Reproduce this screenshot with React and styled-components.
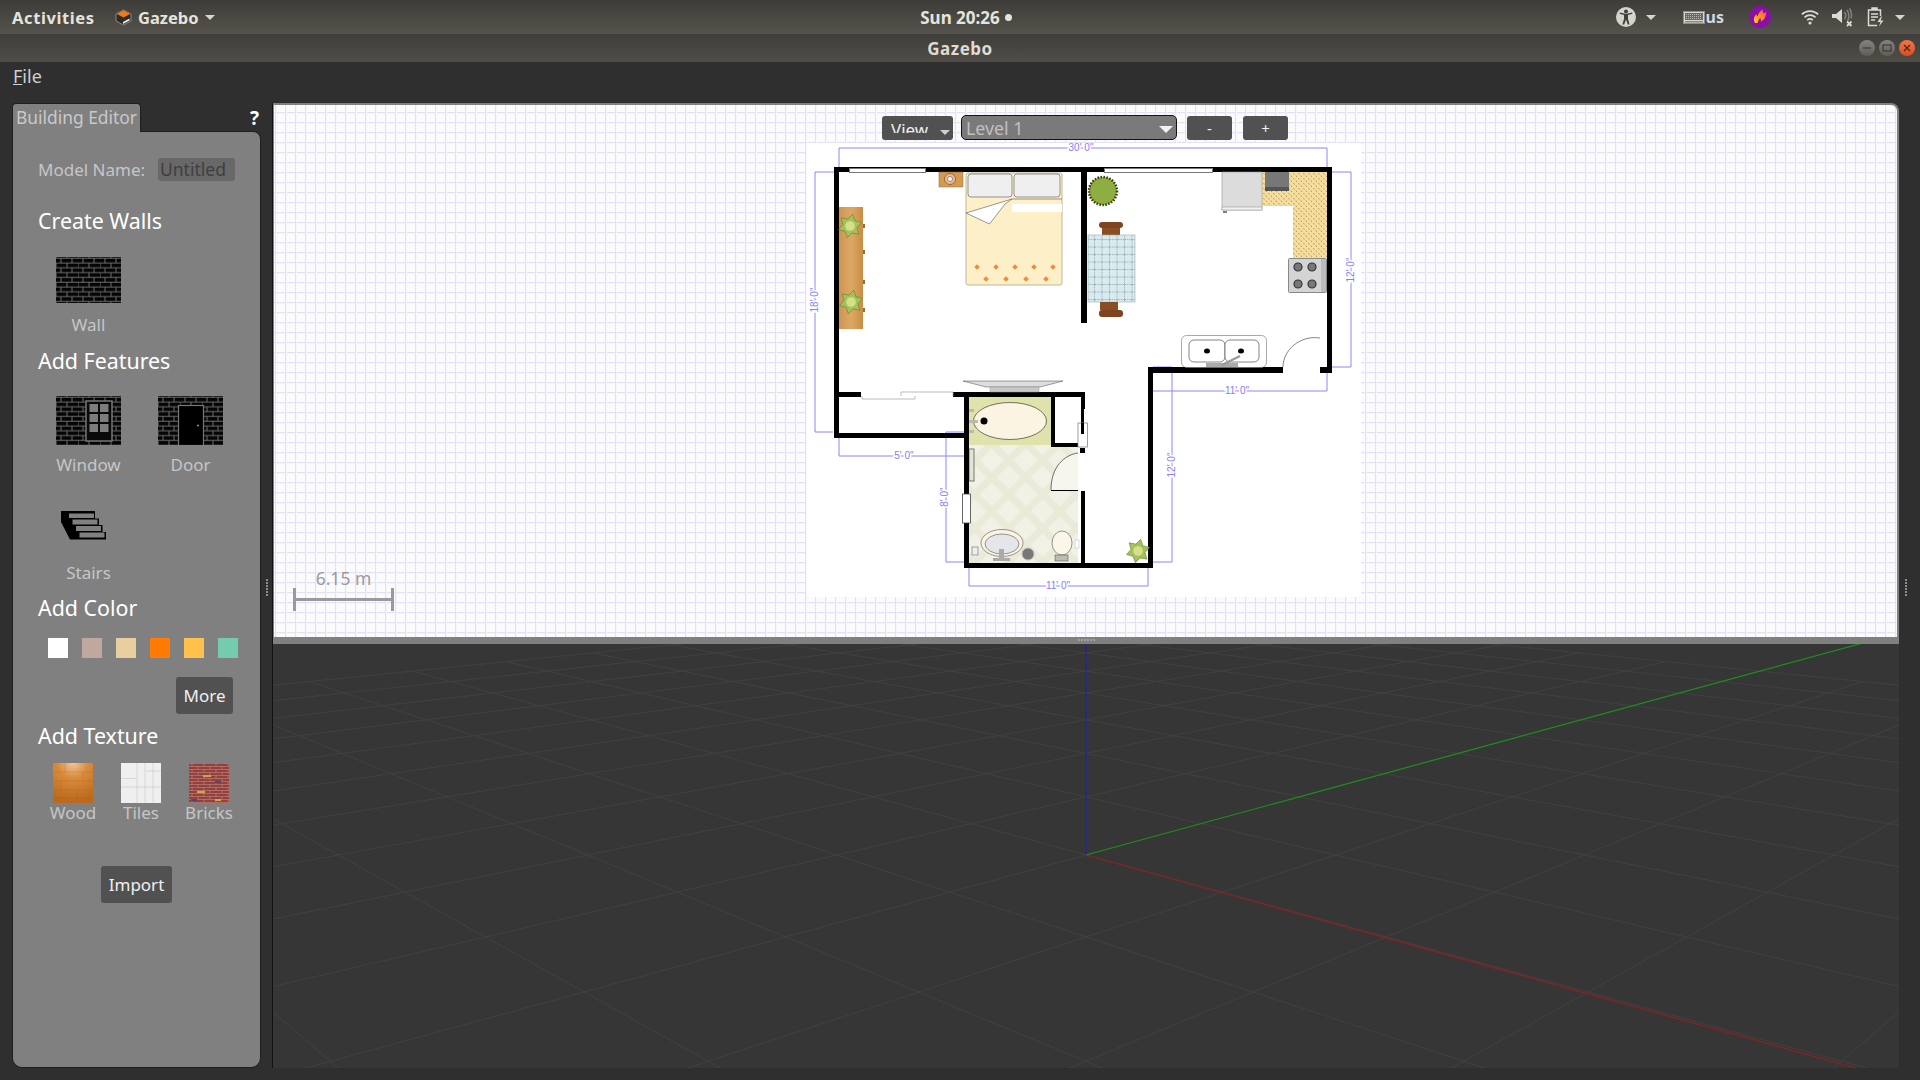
import React from 'react';
import styled, { createGlobalStyle } from 'styled-components';

const GlobalStyle = createGlobalStyle`
  html, body {
    margin: 0;
    padding: 0;
    background: #2f2f2f;
  }
  * {
    box-sizing: border-box;
  }
  body {
    font-family: "Noto Sans", "Open Sans", sans-serif;
  }
`;

const Page = styled.div`
  width: 1920px;
  height: 1080px;
  display: flex;
  flex-direction: column;
  overflow: hidden;
  background: #2f2f2f;
`;

/* ---- ubuntu shell ---- */

const TopBar = styled.div`
  height: 34px;
  display: grid;
  grid-template-columns: 1fr auto 1fr;
  align-items: center;
  background: linear-gradient(#3d3c38, #55534c);
  color: #e6e3dc;
  font-size: 16.5px;
  font-weight: 700;
`;

const TopLeft = styled.div`
  display: flex;
  align-items: center;
  padding-left: 12px;
`;

const Activities = styled.span`
  width: 82px;
  letter-spacing: 0.6px;
  white-space: nowrap;
`;

const AppMenu = styled.div`
  display: flex;
  align-items: center;
  gap: 6px;
  margin-left: 21px;
`;

const Caret = styled.span`
  width: 0;
  height: 0;
  margin-left: ${(p) => p.$left || 0}px;
  border-left: 5px solid transparent;
  border-right: 5px solid transparent;
  border-top: 5px solid #d8d5ce;
`;

const Clock = styled.div`
  display: flex;
  align-items: center;
  gap: 5px;
  padding-left: 12px;
  font-size: 17px;
`;

const ClockDot = styled.span`
  width: 7px;
  height: 7px;
  border-radius: 50%;
  background: #e6e3dc;
`;

const TopRight = styled.div`
  display: flex;
  align-items: center;
  justify-content: flex-end;
  padding-right: 15px;
`;

const TrayIcon = styled.svg`
  display: block;
  flex: none;
  margin-left: ${(p) => p.$left || 0}px;
`;

const LayoutText = styled.span`
  font-size: 16px;
  color: #cfd8e0;
  margin-left: 1px;
`;

const TitleBar = styled.div`
  height: 28px;
  position: relative;
  display: flex;
  align-items: center;
  justify-content: center;
  background: linear-gradient(#3f3e3a, #4f4d46);
  color: #dfdbd2;
  font-size: 17px;
  font-weight: 700;
  letter-spacing: 0.5px;
`;

const WindowButtons = styled.div`
  position: absolute;
  right: 5px;
  top: 6px;
  display: flex;
  gap: 4px;
`;

const WindowButton = styled.div`
  width: 16px;
  height: 16px;
  border-radius: 50%;
  display: flex;
  align-items: center;
  justify-content: center;
  background: ${(p) => (p.$close ? 'linear-gradient(#f0764a, #d94f1f)' : 'linear-gradient(#85837c, #5f5d57)')};
`;

const MenuBar = styled.div`
  height: 41px;
  padding: 3px 0 0 13px;
  color: #cfcfcf;
  font-size: 18px;
  line-height: 22px;
`;

const Accel = styled.span`
  text-decoration: underline;
`;

/* ---- main area ---- */

const Main = styled.div`
  flex: 1;
  display: flex;
  padding: 0 0 12px 12px;
`;

const Panel = styled.div`
  width: 249px;
  display: flex;
  flex-direction: column;
`;

const TabRow = styled.div`
  height: 29px;
  display: flex;
  justify-content: space-between;
  margin-bottom: -1px;
  z-index: 1;
`;

const Tab = styled.div`
  width: 129px;
  height: 29px;
  background: #808080;
  border: 1px solid #1f1f1f;
  border-bottom: none;
  border-radius: 4px 4px 0 0;
  color: #c9c9c9;
  font-size: 17.4px;
  line-height: 27px;
  padding-left: 3px;
  white-space: nowrap;
`;

const Help = styled.div`
  width: 11px;
  color: #fff;
  font-size: 19px;
  font-weight: 700;
  line-height: 30px;
`;

const PanelBody = styled.div`
  flex: 1;
  background: #808080;
  border: 1px solid #1f1f1f;
  border-radius: 0 8px 10px 10px;
`;

const ModelRow = styled.div`
  display: flex;
  align-items: center;
  justify-content: space-between;
  width: 197px;
  height: 23px;
  margin: 26px 0 0 25px;
  color: #c6c6c6;
  font-size: 17px;
  white-space: nowrap;
`;

const ModelInput = styled.div`
  width: 77px;
  height: 23px;
  padding-left: 2px;
  background: #686868;
  border-radius: 3px;
  color: #3f3f3f;
  font-size: 17.500px;
  line-height: 22px;
`;

const SectionTitle = styled.div`
  height: 28px;
  margin: ${(p) => p.$top}px 0 0 25px;
  color: #fff;
  font-size: 21.400px;
  line-height: 28px;
`;

const ToolRow = styled.div`
  display: flex;
  gap: 37px;
  margin: ${(p) => p.$top}px 0 0 43px;
`;

const ToolItem = styled.div`
  width: 65px;
  display: flex;
  flex-direction: column;
  align-items: center;
`;

const ToolLabel = styled.div`
  height: 20px;
  margin-top: ${(p) => p.$top}px;
  color: #c6c6c6;
  font-size: 17px;
  line-height: 20px;
`;

const Swatches = styled.div`
  display: flex;
  gap: 14px;
  margin: 16px 0 0 35px;
`;

const Swatch = styled.div`
  width: 20px;
  height: 20px;
  background: ${(p) => p.$color};
`;

const DarkButton = styled.div`
  width: ${(p) => p.$width}px;
  height: 37px;
  margin: ${(p) => p.$top}px 0 0 ${(p) => p.$left}px;
  display: flex;
  align-items: center;
  justify-content: center;
  background: #515151;
  border-radius: 3px;
  color: #efefef;
  font-size: 17px;
`;

const TextureRow = styled.div`
  display: flex;
  margin: 13px 0 0 26px;
`;

const TextureItem = styled.div`
  width: 68px;
  display: flex;
  flex-direction: column;
  align-items: center;
`;

const Gutter = styled.div`
  width: ${(p) => p.$width}px;
  padding: 476px 0 0 ${(p) => p.$left}px;
`;

const Dots = styled.div`
  width: 2px;
  height: 17px;
  background: repeating-linear-gradient(#8c8c8c 0 2px, transparent 2px 3px);
`;

const Editor = styled.div`
  width: 1627px;
  display: flex;
  flex-direction: column;
  border-left: 1px solid #111;
  background: #808080;
  border-radius: 0 8px 0 0;
  overflow: hidden;
`;

const CanvasFrame = styled.div`
  padding: 2px 2px 0 1px;
`;

const Canvas = styled.div`
  position: relative;
  height: 532px;
  background-color: #fbfbfc;
  background-image:
    linear-gradient(90deg, #e4e1f7 1px, #f6f5fb 1px, #f6f5fb 2px, transparent 2px),
    linear-gradient(#e4e1f7 1px, #f6f5fb 1px, #f6f5fb 2px, transparent 2px);
  background-size: 10px 10px;
  background-position: 1px 7px;
  border-radius: 0 6px 0 0;
`;

const PlanWrap = styled.div`
  position: absolute;
  left: 533px;
  top: 38px;
  width: 554px;
  height: 454px;
`;

const CanvasBar = styled.div`
  position: absolute;
  left: 608px;
  top: 10px;
  display: flex;
  align-items: center;
`;

const ViewButton = styled.div`
  position: relative;
  width: 71px;
  height: 24px;
  background: #515151;
  border-radius: 3px;
  color: #efefef;
  font-size: 17px;
  padding-left: 9px;
`;

const ViewText = styled.div`
  height: 17px;
  overflow: hidden;
  line-height: 27px;
`;

const ViewCaret = styled.span`
  position: absolute;
  right: 3px;
  bottom: 5px;
  width: 0;
  height: 0;
  border-left: 5px solid transparent;
  border-right: 5px solid transparent;
  border-top: 5px solid #d0d0d0;
`;

const LevelSelect = styled.div`
  width: 216px;
  height: 25px;
  margin-left: 8px;
  display: flex;
  align-items: center;
  justify-content: space-between;
  padding: 0 3px 0 4px;
  background: #7a7a7a;
  border: 1px solid #141414;
  border-radius: 5px;
  color: #c0c0c0;
  font-size: 17.800px;
`;

const LevelCaret = styled.span`
  width: 0;
  height: 0;
  margin-top: 3px;
  border-left: 7px solid transparent;
  border-right: 7px solid transparent;
  border-top: 7px solid #f2f2f2;
`;

const LevelButton = styled.div`
  width: 45px;
  height: 24px;
  margin-left: ${(p) => p.$left}px;
  display: flex;
  align-items: center;
  justify-content: center;
  background: #515151;
  border-radius: 3px;
  color: #efefef;
  font-size: 15px;
`;

const ScaleBar = styled.div`
  position: absolute;
  left: 19px;
  top: 464px;
  width: 101px;
  display: flex;
  flex-direction: column;
  align-items: center;
  color: #9a9a9e;
  font-size: 17.500px;
  line-height: 19px;
`;

const ScaleLine = styled.div`
  position: relative;
  width: 101px;
  height: 23px;
  border-left: 3px solid #9a9a9e;
  border-right: 3px solid #9a9a9e;

  &::before {
    content: '';
    position: absolute;
    left: 0;
    right: 0;
    top: 10px;
    height: 3px;
    background: #9a9a9e;
  }
`;

const Splitter = styled.div`
  height: 7px;
  display: flex;
  justify-content: center;
  padding: 2px 0 0 0;
`;

const SplitDots = styled.div`
  width: 17px;
  height: 2px;
  background: repeating-linear-gradient(90deg, #a0a0a0 0 2px, transparent 2px 3px);
`;

const Scene = styled.div`
  flex: 1;
  background: #363636;
`;

const SceneSvg = styled.svg`
  display: block;
  width: 1627px;
  height: 424px;
`;

const StairsSvg = styled.svg`
  display: block;
  margin-right: 9px;
`;

/* ---- drawings ---- */

const GazeboLogo = () => (
  <TrayIcon width="17" height="17" viewBox="0 0 17 17">
    <path d="M1 5 8.5 1 16 5v7l-7.5 4L1 12z" fill="#2e2d2a" stroke="#8a8880" strokeWidth="1" />
    <path d="M2 5 8.5 1.5 15 5 8.5 8.5z" fill="#f47b14" />
    <path d="M8 13 14.5 9.5v2L8 15z" fill="#eee" />
  </TrayIcon>
);

const Accessibility = () => (
  <TrayIcon width="20" height="20" viewBox="0 0 20 20">
    <circle cx="10" cy="10" r="10" fill="#d6d4cd" />
    <circle cx="10" cy="4.6" r="2" fill="#3f3e3a" />
    <path d="M3.5 6.8 8 8v4l-1.6 5.6h1.8L10 12.4l1.8 5.2h1.8L12 12V8l4.5-1.2-.4-1.3L10 7 3.9 5.5z" fill="#3f3e3a" />
  </TrayIcon>
);

const Keyboard = () => (
  <TrayIcon $left={27} width="22" height="13" viewBox="0 0 22 13">
    <rect x="0.5" y="0.5" width="21" height="12" fill="#d8d6cf" stroke="#8f8d86" />
    <rect x="2" y="2" width="18" height="7" fill="#6a6964" />
    <path d="M3 3.5h16M3 5.5h16M3 7.5h16" stroke="#b9b7b0" strokeDasharray="1 1" />
    <rect x="2" y="10" width="18" height="1.5" fill="#8a8880" />
  </TrayIcon>
);

const Flame = () => (
  <TrayIcon $left={25} width="22" height="22" viewBox="0 0 22 22">
    <defs>
      <linearGradient id="flameFill" x1="0" y1="1" x2="1" y2="0">
        <stop offset="0" stopColor="#ffd21f" />
        <stop offset="0.55" stopColor="#ff8a1c" />
        <stop offset="1" stopColor="#f0359a" />
      </linearGradient>
    </defs>
    <circle cx="11" cy="11" r="11" fill="#8b0fa6" />
    <path d="M6 17C3.5 13 6 9.5 7.5 8c0 1.6.6 2.2 1.2 2.6C9 8 11 5 14 3.6c-.8 2 0 3.4 1 3.6.8-.2 1.6-.9 2.2-2C17.500 9 16 14 11.500 15.500c1-1.600.5-3-.6-3.800C10.500 13.500 8.500 15 8.700 17z" fill="url(#flameFill)" />
  </TrayIcon>
);

const Wifi = () => (
  <TrayIcon $left={30} width="18" height="16" viewBox="0 0 18 16" fill="none" stroke="#dcdad3" strokeWidth="1.7">
    <path d="M.8 5.400C5.300 1 12.700 1 17.200 5.400" />
    <path d="M3.500 8.300C6.700 5.300 11.300 5.300 14.500 8.300" />
    <path d="M6.200 11.100C7.800 9.700 10.200 9.700 11.800 11.100" />
    <circle cx="9" cy="14" r="1.600" fill="#dcdad3" stroke="none" />
  </TrayIcon>
);

const Volume = () => (
  <TrayIcon $left={13} width="21" height="20" viewBox="0 0 21 20" fill="none">
    <path d="M0 7h4l6-5v14l-6-5H0z" fill="#dcdad3" />
    <path d="M12.500 5c1.500 2 1.500 5 0 7M15 3c2.300 3 2.300 8 .6 11M17.500 1.500c2 3 2.300 7 1.500 10" stroke="#85837c" strokeWidth="1.500" />
    <path d="M15 14.500l4.500 4.500M19.500 14.500 15 19" stroke="#dcdad3" strokeWidth="1.800" />
  </TrayIcon>
);

const Battery = () => (
  <TrayIcon $left={14} width="18" height="20" viewBox="0 0 18 20" fill="none" stroke="#dcdad3" strokeWidth="1.500">
    <path d="M10 18.500H1.500V3h12v6" />
    <path d="M5 3V1h5v2" fill="#dcdad3" />
    <path d="M4 7h7M4 10h7M4 13h4" />
    <path d="M14 9.500 10.500 15h3l-1.500 4.500 4.500-6h-3l1.500-4z" fill="#dcdad3" stroke="none" />
  </TrayIcon>
);

const BrickIcon = ({ id, height, children }) => (
  <svg width="65" height={height} viewBox={`0 0 65 ${height}`} style={{ display: 'block' }}>
    <defs>
      <pattern id={id} width="22" height="9.600" patternUnits="userSpaceOnUse">
        <rect width="22" height="9.600" fill="#050505" />
        <path d="M0 1.200H22M0 6H22" stroke="#6f6f6f" strokeWidth="1" />
        <path d="M5 1.200V6M16 1.200V6M0 6V9.600M11 6V9.600M0 0V1.200M11 0V1.200" stroke="#6f6f6f" strokeWidth="1" />
      </pattern>
    </defs>
    <rect width="65" height={height} fill={`url(#${id})`} />
    {children}
  </svg>
);

const WindowIcon = () => (
  <BrickIcon id="brickWindow" height={49}>
    <rect x="30" y="5" width="26" height="40" fill="#0a0a0a" stroke="#777" strokeWidth="1.500" />
    {[8, 18, 28].map((y) => (
      <React.Fragment key={y}>
        <rect x="33.500" y={y} width="8.500" height="8" fill="#7d7d7d" />
        <rect x="44" y={y} width="8.500" height="8" fill="#7d7d7d" />
      </React.Fragment>
    ))}
  </BrickIcon>
);

const DoorIcon = () => (
  <BrickIcon id="brickDoor" height={49}>
    <rect x="20.500" y="9.500" width="25" height="40" fill="#000" stroke="#777" strokeWidth="1.200" />
    <circle cx="40" cy="29.500" r="1" fill="#9a9a9a" />
  </BrickIcon>
);

const StairsIcon = () => (
  <StairsSvg width="46" height="29" viewBox="0 0 46 29">
    <path d="M0 0H34V7.500H38V14H41.500V21H45V28.500H9L0 11z" fill="#000" />
    <rect x="8" y="2.500" width="25" height="4.500" fill="#808080" />
    <rect x="11.500" y="8.500" width="25" height="5" fill="#808080" />
    <rect x="15" y="15" width="25" height="5" fill="#808080" />
    <rect x="18.500" y="21.500" width="25" height="5" fill="#808080" />
  </StairsSvg>
);

const WoodTexture = () => (
  <svg width="40" height="40" viewBox="0 0 40 40" style={{ display: 'block' }}>
    <defs>
      <radialGradient id="woodGlow" cx="0.500" cy="0" r="0.950">
        <stop offset="0" stopColor="#eec79a" />
        <stop offset="0.400" stopColor="#d98b3c" />
        <stop offset="1" stopColor="#bd6a1e" />
      </radialGradient>
    </defs>
    <rect width="40" height="40" fill="url(#woodGlow)" />
    <path d="M0 9H40M0 18H40M0 27H40M0 35H40M12 0V9M30 9V18M8 18V27M24 27V35M16 35V40" stroke="#a85a18" strokeWidth="0.500" opacity="0.450" />
  </svg>
);

const TilesTexture = () => (
  <svg width="40" height="40" viewBox="0 0 40 40" style={{ display: 'block' }}>
    <rect width="40" height="40" fill="#efefef" />
    <path d="M0 15.500H16M0 24H40M16 0V40M24 0V40M32 0V40M24 8H40" stroke="#d6d6d6" strokeWidth="1" />
  </svg>
);

const BricksTexture = () => (
  <svg width="40" height="40" viewBox="0 0 40 40" style={{ display: 'block' }}>
    <defs>
      <pattern id="redBricks" width="12" height="6" patternUnits="userSpaceOnUse">
        <rect width="12" height="6" fill="#94403c" />
        <path d="M0 .5H12M0 3.500H12M3 .5V3.500M9 3.500V6" stroke="#c08a86" strokeWidth="0.600" />
      </pattern>
    </defs>
    <rect width="40" height="40" fill="url(#redBricks)" />
    <rect x="14" y="12" width="8" height="2" fill="#c9a94a" />
    <rect x="8" y="28" width="8" height="2" fill="#c9a94a" />
    <rect x="26" y="36" width="6" height="2" fill="#c9a94a" />
    <rect x="26" y="18" width="6" height="2" fill="#4a4a6a" />
    <rect x="2" y="36" width="6" height="2" fill="#4a4a6a" />
  </svg>
);

const Plant = ({ x, y, r }) => {
  const points = [];
  for (let i = 0; i < 12; i++) {
    const a = (i * Math.PI) / 6 - 0.3;
    const d = i % 2 === 0 ? r : r * 0.6;
    points.push(`${x + d * Math.cos(a)},${y + d * Math.sin(a)}`);
  }
  return (
    <g>
      <polygon points={points.join(' ')} fill="#a4c25a" stroke="#5f7a30" strokeWidth="0.600" />
      <circle cx={x} cy={y} r={r * 0.4} fill="#d5e08a" />
    </g>
  );
};

const BURNERS = [
  [1298, 267],
  [1312, 267],
  [1298, 284],
  [1312, 284],
];

const BED_DOTS = [
  [977, 267], [996, 267], [1015, 267], [1034, 267], [1053, 267],
  [986, 279], [1006, 279], [1026, 279], [1046, 279],
];

// rectangles for the wall outline, in page pixels
const WALLS = [
  [834, 167, 498, 5],
  [834, 167, 5, 271],
  [1327, 167, 5, 206],
  [1081, 172, 6, 151],
  [834, 433, 135, 5],
  [834, 392, 27, 5],
  [953, 392, 132, 5],
  [964, 392, 5, 176],
  [964, 563, 189, 5],
  [1148, 367, 5, 201],
  [1148, 367, 135, 6],
  [1320, 367, 12, 6],
  [1051, 397, 4, 50],
  [1051, 443, 27, 4],
  [1081, 392, 4, 17],
  [1081, 409, 3, 26],
  [1080, 448, 5, 5],
  [1081, 491, 4, 72],
];

const DIMENSIONS = [
  'M839 167V148H1327V167',
  'M834 172H815V432H833',
  'M1332 172H1351V367H1332',
  'M969 568V586H1148V568',
  'M839 438V456H969',
  'M964 432H946V562H964',
  'M1149 391H1327V373',
  'M1153 367H1172V562H1153',
  'M1149 367V391H1153',
];

const DIM_LABELS = [
  { x: 1081, y: 151, text: '30\' 0"' },
  { x: 904, y: 459, text: '5\' 0"' },
  { x: 1058, y: 589, text: '11\' 0"' },
  { x: 1237, y: 394, text: '11\' 0"' },
  { x: 815, y: 300, text: '18\' 0"', rotate: true },
  { x: 1351, y: 270, text: '12\' 0"', rotate: true },
  { x: 945, y: 497, text: '8\' 0"', rotate: true },
  { x: 1172, y: 465, text: '12\' 0"', rotate: true },
];

const FloorPlan = () => (
  <svg width="554" height="454" viewBox="807 143 554 454" style={{ display: 'block' }}>
    <defs>
      <pattern id="floorTile" width="24" height="24" patternUnits="userSpaceOnUse" patternTransform="rotate(45 1020 500)">
        <rect width="24" height="24" fill="#ebead8" />
        <rect x="3.500" y="3.500" width="17" height="17" fill="#f1f1e6" />
      </pattern>
      <pattern id="counter" width="5" height="5" patternUnits="userSpaceOnUse">
        <rect width="5" height="5" fill="#f5dd9e" />
        <path d="M1 .5l.8 1.500M3.500 3l.8 1.500" stroke="#8a7238" strokeWidth="0.600" />
      </pattern>
      <pattern id="cloth" width="7.500" height="7.500" patternUnits="userSpaceOnUse">
        <rect width="7.500" height="7.500" fill="#d8ebef" />
        <path d="M0 7H7.500M7 0V7.500" stroke="#51666c" strokeWidth="0.500" strokeDasharray="1 1" />
      </pattern>
      <linearGradient id="deskWood" x1="0" y1="0" x2="1" y2="0">
        <stop offset="0" stopColor="#cf9550" />
        <stop offset="0.500" stopColor="#dda864" />
        <stop offset="1" stopColor="#c98d45" />
      </linearGradient>
    </defs>
    <rect x="807" y="143" width="554" height="454" fill="#fff" />

    <g fill="none" stroke="#8c86f5" strokeWidth="1">
      {DIMENSIONS.map((d) => (
        <path key={d} d={d} />
      ))}
    </g>

    {/* bathroom floors */}
    <rect x="969" y="445" width="109" height="118" fill="url(#floorTile)" />
    <rect x="969" y="397" width="82" height="48" fill="#dfe2aa" />
    <ellipse cx="1010" cy="421" rx="36.500" ry="18.500" fill="#fbf4e2" stroke="#222" strokeWidth="0.600" />
    <circle cx="984" cy="421" r="3.500" fill="#000" />
    <path d="M969 409h5v3h-5zM969 420h9v3h-9zM969 430h5v3h-5z" fill="#b9b9b0" />
    <rect x="969" y="449" width="5" height="32" fill="#e4e4d5" stroke="#777" />
    <ellipse cx="1002" cy="543" rx="21" ry="13.500" fill="#fbf4e2" stroke="#555" strokeWidth="0.600" />
    <ellipse cx="1002" cy="544" rx="17" ry="10" fill="#e4e6e9" stroke="#555" strokeWidth="0.600" />
    <path d="M999 549h5v10h-5zM993 558h17v3h-17z" fill="#aaa" />
    <circle cx="1028" cy="554" r="6" fill="#777" stroke="#bbb" />
    <rect x="972" y="547" width="6" height="8" fill="#eee" stroke="#555" strokeWidth="0.500" />
    <ellipse cx="1062" cy="543" rx="10" ry="12" fill="#fbf6e8" stroke="#555" strokeWidth="0.600" />
    <rect x="1055" y="555" width="13" height="6" fill="#bdbdb2" stroke="#444" strokeWidth="0.500" />
    <rect x="1075" y="540" width="4" height="8" fill="#fff" stroke="#bbb" strokeWidth="0.500" />
    <path d="M1078 453C1064 455 1051 467 1051 490H1078" fill="#f6f6ee" stroke="none" />
    <path d="M1078 453C1064 455 1051 467 1051 490" fill="none" stroke="#333" strokeWidth="0.700" />

    {/* walls */}
    <g fill="#000">
      {WALLS.map(([x, y, w, h]) => (
        <rect key={`${x}-${y}-${w}`} x={x} y={y} width={w} height={h} />
      ))}
    </g>
    <path d="M1051 490.500H1078" stroke="#000" strokeWidth="1" />

    {/* windows and doors set in the walls */}
    <rect x="849.500" y="168.500" width="76" height="4" fill="#fff" stroke="#777" />
    <rect x="1104.500" y="168.500" width="108" height="4" fill="#fff" stroke="#777" />
    <path d="M862 396v3h53v-3M901 396v-4h52v4" fill="#fff" stroke="#aaa" strokeWidth="0.800" />
    <rect x="962.500" y="494" width="8" height="29" fill="#fff" stroke="#444" strokeWidth="0.800" />
    <rect x="1078" y="423" width="9.500" height="24" fill="#fff" stroke="#888" strokeWidth="0.800" />
    <rect x="1081" y="423" width="3" height="11" fill="#000" />
    <path d="M1283 367C1283 350 1300 335 1320 338" fill="none" stroke="#333" strokeWidth="0.600" />

    {/* mirror over the bathroom wall */}
    <path d="M963 381H1063L1040 387H986z" fill="#ddd" stroke="#444" strokeWidth="0.500" />
    <rect x="990" y="387" width="49" height="5" fill="#c8c8c8" stroke="#999" strokeWidth="0.500" />

    {/* bedroom */}
    <rect x="839" y="207" width="24" height="122" fill="url(#deskWood)" />
    <path d="M863 224h2v4h-2zM863 250h2v4h-2zM863 280h2v4h-2zM863 308h2v4h-2z" fill="#9c6a30" />
    <Plant x={850} y={226} r={12} />
    <Plant x={851} y={302} r={12} />
    <rect x="939" y="172" width="24" height="15" fill="#d39a52" stroke="#8a6a3a" strokeWidth="0.500" />
    <circle cx="950" cy="179" r="5.500" fill="#f2b98e" stroke="#7a4a2a" strokeWidth="0.700" />
    <circle cx="950" cy="179" r="2.500" fill="#fff" stroke="#333" strokeWidth="0.500" />
    <rect x="966" y="173" width="96" height="112" rx="2" fill="#fdf0c9" stroke="#bdb59a" />
    <rect x="968" y="174" width="44" height="23" rx="3" fill="#efefef" stroke="#555" strokeWidth="0.600" />
    <rect x="1014" y="174" width="46" height="23" rx="3" fill="#efefef" stroke="#555" strokeWidth="0.600" />
    <rect x="1012" y="204" width="50" height="8" fill="#fff" />
    <path d="M1012 199H1062M966 213L1012 199 1005 204 989.500 224z" fill="#fff" stroke="#555" strokeWidth="0.600" />
    <g fill="#ef8b3b">
      {BED_DOTS.map(([x, y]) => (
        <rect key={`${x}-${y}`} x={x - 2} y={y - 2} width="4" height="4" transform={`rotate(45 ${x} ${y})`} />
      ))}
    </g>

    {/* dining */}
    <circle cx="1103" cy="191" r="14" fill="#8eae42" stroke="#3a3416" strokeWidth="2.500" strokeDasharray="1.500 1.500" />
    <rect x="1099" y="222" width="24" height="6" rx="3" fill="#80431f" />
    <rect x="1102" y="228" width="18" height="7" fill="#8a4e25" />
    <rect x="1088" y="235" width="47" height="67" fill="url(#cloth)" stroke="#9aa" strokeWidth="0.600" />
    <rect x="1100" y="302" width="18" height="8" fill="#8a4e25" />
    <rect x="1099" y="310" width="24" height="7" rx="3" fill="#80431f" />

    {/* kitchen */}
    <path d="M1262 172H1327V258H1293V206H1262z" fill="url(#counter)" />
    <rect x="1265" y="172" width="24" height="19" fill="#777" />
    <rect x="1265" y="187" width="24" height="4" fill="#555" />
    <rect x="1222" y="172" width="40" height="38" fill="#dcdcdc" stroke="#999" strokeWidth="0.600" />
    <rect x="1222" y="207" width="40" height="3" fill="#f2f2f2" stroke="#888" strokeWidth="0.500" />
    <path d="M1223 212h4" stroke="#000" />
    <rect x="1288.500" y="258.500" width="38" height="34" rx="1" fill="#d4d4d4" stroke="#888" />
    <rect x="1321" y="259" width="5" height="33" fill="#bbb" />
    {BURNERS.map(([x, y]) => (
      <circle key={`${x}-${y}`} cx={x} cy={y} r="4" fill="#777" stroke="#333" strokeWidth="1.200" />
    ))}
    <rect x="1181.500" y="335.500" width="85" height="32" rx="5" fill="#fff" stroke="#555" strokeWidth="0.500" />
    <rect x="1189" y="340" width="36" height="22" rx="5" fill="#fff" stroke="#333" strokeWidth="0.600" />
    <rect x="1225" y="340" width="34" height="22" rx="5" fill="#fff" stroke="#333" strokeWidth="0.600" />
    <ellipse cx="1207" cy="351" rx="3" ry="2.500" fill="#000" />
    <ellipse cx="1241" cy="351" rx="3" ry="2.500" fill="#000" />
    <rect x="1206" y="363" width="32" height="4" fill="#aaa" />
    <path d="M1222 365 1240 356" stroke="#999" strokeWidth="2" />
    <Plant x={1138} y={551} r={12} />

    <g fontFamily="Liberation Sans, sans-serif" fontSize="10" fill="#8480f0" stroke="#fff" strokeWidth="3" paintOrder="stroke" xmlSpace="preserve">
      {DIM_LABELS.map((l) => (
        <text
          key={`${l.x}-${l.y}`}
          x={l.x}
          y={l.y}
          textAnchor="middle"
          transform={l.rotate ? `rotate(-90 ${l.x} ${l.y}) translate(0 3)` : undefined}
        >
          {l.text}
        </text>
      ))}
    </g>
  </svg>
);

// gazebo's default view: 60 degree fov looking at the origin along the diagonal
const FOCAL = 1410;
const SIN_T = 0.273;
const COS_T = 0.962;
const DIST = 8;
const R2 = Math.SQRT1_2;

const project = (x, y) => {
  const xc = R2 * (x + y);
  const yc = R2 * (y - x) * SIN_T;
  const zc = DIST + R2 * (y - x) * COS_T;
  return { zc, u: 1085 + (FOCAL * xc) / zc, v: 855 - (FOCAL * yc) / zc };
};

const clipLine = (a, b, k, alongY) => {
  // move the near end up to the point where depth is still positive
  const near = 0.6;
  const limit = (near - DIST) / (R2 * COS_T);
  if (alongY) {
    const y = Math.max(-10, k + limit);
    return [project(k, y), b];
  }
  const x = Math.min(10, k - limit);
  return [a, project(x, k)];
};

const groundLines = () => {
  const lines = [];
  for (let k = -10; k <= 10; k++) {
    const alongY = [project(k, -10), project(k, 10)];
    const alongX = [project(-10, k), project(10, k)];
    lines.push(alongY[0].zc > 0.2 ? alongY : clipLine(alongY[0], alongY[1], k, true));
    lines.push(alongX[1].zc > 0.2 ? alongX : clipLine(alongX[0], alongX[1], k, false));
  }
  return lines;
};

const SceneGrid = () => (
  <SceneSvg viewBox="272 644 1627 424">
    <g stroke="#414141" strokeWidth="1">
      {groundLines().map(([a, b], i) => (
        <line key={i} x1={a.u} y1={a.v} x2={b.u} y2={b.v} />
      ))}
    </g>
    <line x1="1085" y1="855" x2="1085" y2="644" stroke="#2222b0" strokeWidth="1.200" />
    <line x1="1085" y1="855" x2="1862" y2="643" stroke="#1a8f1a" strokeWidth="1.200" />
    <line x1="1085" y1="855" x2="1855" y2="1068" stroke="#8f2020" strokeWidth="1.200" />
  </SceneSvg>
);

const COLORS = ['#ffffff', '#c0a89e', '#e9cfa0', '#ff7b05', '#ffc04c', '#74cbae'];

const App = () => (
  <Page>
    <GlobalStyle />
    <TopBar>
      <TopLeft>
        <Activities>Activities</Activities>
        <AppMenu>
          <GazeboLogo />
          Gazebo
          <Caret />
        </AppMenu>
      </TopLeft>
      <Clock>
        Sun 20:26
        <ClockDot />
      </Clock>
      <TopRight>
        <Accessibility />
        <Caret $left={10} />
        <Keyboard />
        <LayoutText>us</LayoutText>
        <Flame />
        <Wifi />
        <Volume />
        <Battery />
        <Caret $left={10} />
      </TopRight>
    </TopBar>
    <TitleBar>
      Gazebo
      <WindowButtons>
        <WindowButton>
          <svg width="10" height="10" viewBox="0 0 10 10">
            <path d="M1 5H9" stroke="#333" strokeWidth="1" />
          </svg>
        </WindowButton>
        <WindowButton>
          <svg width="10" height="10" viewBox="0 0 10 10">
            <rect x="1" y="2" width="8" height="6" fill="none" stroke="#333" strokeWidth="1" />
          </svg>
        </WindowButton>
        <WindowButton $close>
          <svg width="10" height="10" viewBox="0 0 10 10">
            <path d="M2 2 8 8M8 2 2 8" stroke="#4a2010" strokeWidth="1.100" />
          </svg>
        </WindowButton>
      </WindowButtons>
    </TitleBar>
    <MenuBar>
      <Accel>F</Accel>ile
    </MenuBar>
    <Main>
      <Panel>
        <TabRow>
          <Tab>Building Editor</Tab>
          <Help>?</Help>
        </TabRow>
        <PanelBody>
          <ModelRow>
            Model Name:
            <ModelInput>Untitled</ModelInput>
          </ModelRow>
          <SectionTitle $top={26}>Create Walls</SectionTitle>
          <ToolRow $top={22}>
            <ToolItem>
              <BrickIcon id="brickWall" height={46} />
              <ToolLabel $top={12}>Wall</ToolLabel>
            </ToolItem>
          </ToolRow>
          <SectionTitle $top={12}>Add Features</SectionTitle>
          <ToolRow $top={21}>
            <ToolItem>
              <WindowIcon />
              <ToolLabel $top={10}>Window</ToolLabel>
            </ToolItem>
            <ToolItem>
              <DoorIcon />
              <ToolLabel $top={10}>Door</ToolLabel>
            </ToolItem>
          </ToolRow>
          <ToolRow $top={36}>
            <ToolItem>
              <StairsIcon />
              <ToolLabel $top={23}>Stairs</ToolLabel>
            </ToolItem>
          </ToolRow>
          <SectionTitle $top={11}>Add Color</SectionTitle>
          <Swatches>
            {COLORS.map((c) => (
              <Swatch key={c} $color={c} />
            ))}
          </Swatches>
          <DarkButton $width={57} $top={19} $left={163}>
            More
          </DarkButton>
          <SectionTitle $top={8}>Add Texture</SectionTitle>
          <TextureRow>
            <TextureItem>
              <WoodTexture />
              <ToolLabel $top={0}>Wood</ToolLabel>
            </TextureItem>
            <TextureItem>
              <TilesTexture />
              <ToolLabel $top={0}>Tiles</ToolLabel>
            </TextureItem>
            <TextureItem>
              <BricksTexture />
              <ToolLabel $top={0}>Bricks</ToolLabel>
            </TextureItem>
          </TextureRow>
          <DarkButton $width={71} $top={43} $left={88}>
            Import
          </DarkButton>
        </PanelBody>
      </Panel>
      <Gutter $width={11} $left={5}>
        <Dots />
      </Gutter>
      <Editor>
        <CanvasFrame>
          <Canvas>
            <PlanWrap>
              <FloorPlan />
            </PlanWrap>
            <CanvasBar>
              <ViewButton>
                <ViewText>View</ViewText>
                <ViewCaret />
              </ViewButton>
              <LevelSelect>
                Level 1
                <LevelCaret />
              </LevelSelect>
              <LevelButton $left={10}>-</LevelButton>
              <LevelButton $left={11}>+</LevelButton>
            </CanvasBar>
            <ScaleBar>
              6.15 m
              <ScaleLine />
            </ScaleBar>
          </Canvas>
        </CanvasFrame>
        <Splitter>
          <SplitDots />
        </Splitter>
        <Scene>
          <SceneGrid />
        </Scene>
      </Editor>
      <Gutter $width={21} $left={6}>
        <Dots />
      </Gutter>
    </Main>
  </Page>
);

export default App;
